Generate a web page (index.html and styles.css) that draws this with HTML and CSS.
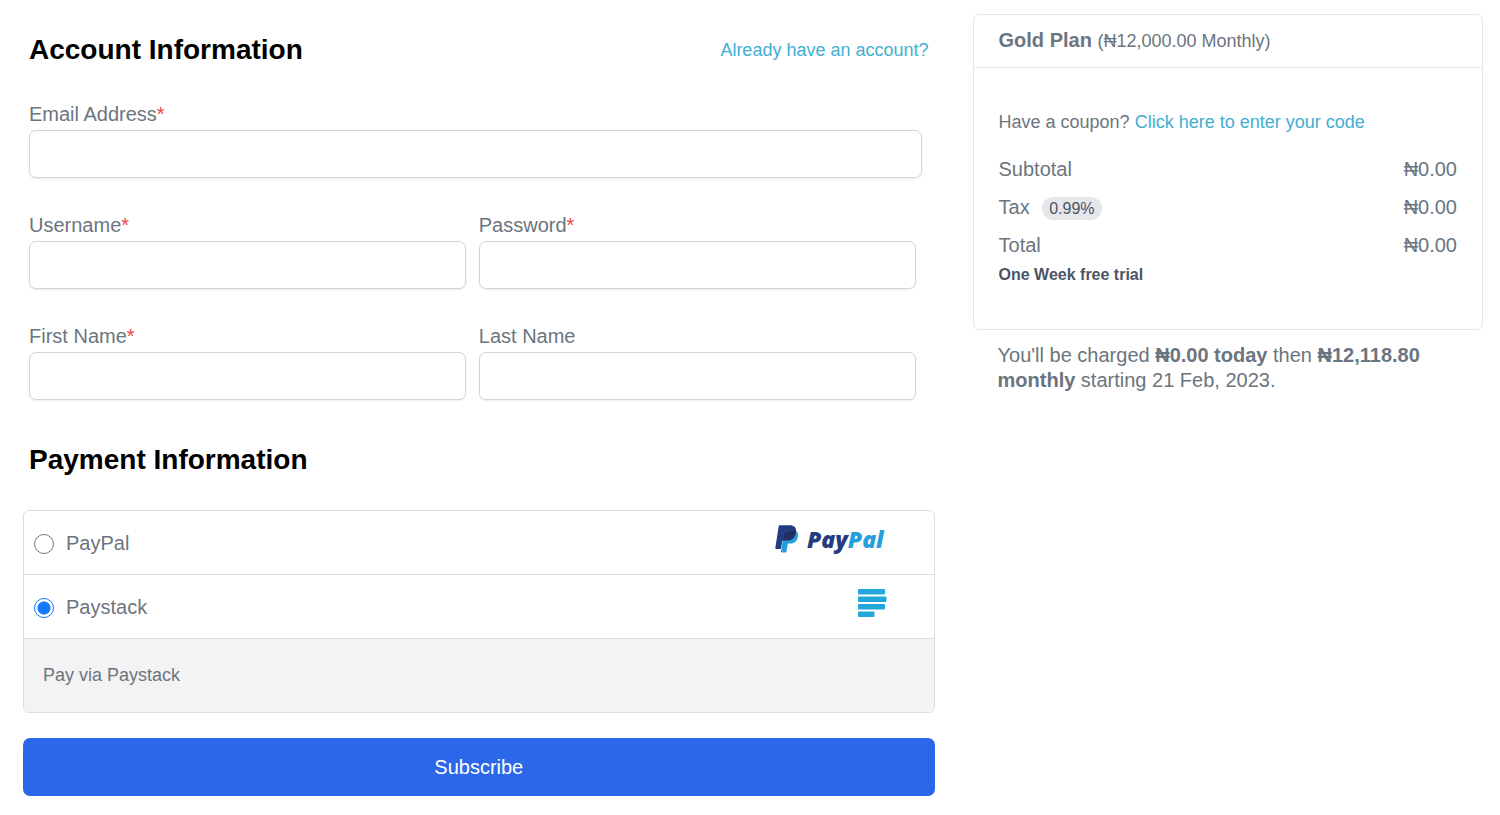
FILE: index.html
```html
<!DOCTYPE html>
<html lang="en">
<head>
  <meta charset="UTF-8" />
  <meta name="viewport" content="width=device-width, initial-scale=1.0" />
  <title>Gold Plan - Checkout</title>
  <link rel="stylesheet" href="styles.css">
</head>
<body>

  <div class="checkout">
    <form class="checkout-form">
      <div class="title-row">
        <h2>Account Information</h2>
        <a href="#" class="link">Already have an account?</a>
      </div>

      <div class="fields">
        <div class="field">
          <label for="email">Email Address<span class="required">*</span></label>
          <input type="email" id="email" required />
        </div>
        <div class="field-row">
          <div class="field">
            <label for="username">Username<span class="required">*</span></label>
            <input type="text" id="username" required />
          </div>
          <div class="field">
            <label for="password">Password<span class="required">*</span></label>
            <input type="password" id="password" required />
          </div>
        </div>
        <div class="field-row">
          <div class="field">
            <label for="first-name">First Name<span class="required">*</span></label>
            <input type="text" id="first-name" required />
          </div>
          <div class="field">
            <label for="last-name">Last Name</label>
            <input type="text" id="last-name" />
          </div>
        </div>
      </div>

      <div class="title-row payment-title">
        <h2>Payment Information</h2>
      </div>

      <div class="gateways">
        <div class="gateway">
          <input type="radio" name="gateway" id="paypal" />
          <label for="paypal">PayPal</label>
          <svg class="gateway-logo" width="112" height="28" viewBox="0 0 112 28" aria-hidden="true">
            <path fill="#253b80" d="M4.6 0.3H14.2C19.2 0.3 21.9 2.9 21 7.4C20 13 16.6 15.6 11.4 15.6H8.8C7.8 15.6 7.3 16.1 7.1 17L6.1 23.2C6 23.8 5.7 24 5.2 24H1C0.5 24 0.2 23.7 0.3 23.1L3.7 1.2C3.8 0.6 4.1 0.3 4.6 0.3Z" />
            <path fill="#249fdc" d="M21.1 6.2C22.8 7.4 23.3 9.4 22.8 12C21.9 16.8 18.9 18.6 14.8 18.6H13.9C13.2 18.6 12.7 19 12.6 19.7L11.5 26.5C11.4 27.1 11.1 27.4 10.5 27.4H6.7C6.2 27.4 5.9 27.1 6 26.6L8.7 8.2C8.9 7.2 9.5 6.6 10.6 6.6Z" />
            <path fill="#222d65" d="M10.6 6.6C9.5 6.6 8.9 7.2 8.7 8.2L7.6 15.9C7.9 15.7 8.3 15.6 8.8 15.6H11.4C16.6 15.6 20 13 21 7.4L21.1 6.2C19.6 5.7 17.8 5.6 15.8 5.7Z" />
            <text class="wordmark" x="32" y="23" fill="#253b80">Pay<tspan fill="#249fdc">Pal</tspan></text>
          </svg>
        </div>
        <div class="gateway">
          <input type="radio" name="gateway" id="paystack" checked />
          <label for="paystack">Paystack</label>
          <svg class="gateway-logo" width="29" height="28" viewBox="0 0 29 28" fill="#22a7db" aria-hidden="true">
            <rect x="0" y="0" width="27" height="5.5" rx="1" />
            <rect x="0" y="7.5" width="28.5" height="5.5" rx="1" />
            <rect x="0" y="15" width="27" height="5.5" rx="1" />
            <rect x="0" y="22.5" width="16.5" height="5.5" rx="1" />
          </svg>
        </div>
        <p class="gateway-info">Pay via Paystack</p>
      </div>

      <button type="submit" class="button">Subscribe</button>
    </form>

    <aside class="summary">
      <div class="card">
        <div class="card-header">
          <strong>Gold Plan</strong> <small>(₦12,000.00 Monthly)</small>
        </div>
        <div class="card-body">
          <p class="coupon">Have a coupon? <a href="#" class="link">Click here to enter your code</a></p>
          <div class="price-row">
            <span>Subtotal</span>
            <span>₦0.00</span>
          </div>
          <div class="price-row">
            <span>Tax <span class="badge">0.99%</span></span>
            <span>₦0.00</span>
          </div>
          <div class="price-row">
            <span>Total</span>
            <span>₦0.00</span>
          </div>
          <p class="trial">One Week free trial</p>
        </div>
      </div>
      <p class="charge-note">You'll be charged <strong>₦0.00 today</strong> then <strong>₦12,118.80 monthly</strong> starting 21 Feb, 2023.</p>
    </aside>
  </div>

</body>
</html>
```
FILE: styles.css
```css
* {
  margin: 0;
  padding: 0;
  box-sizing: border-box;
}

body {
  background: #fff;
  color: #6b7580;
  font-family: Helvetica, "Liberation Sans", Arial, sans-serif;
  font-size: 20px;
  line-height: 28px;
}

.checkout {
  display: grid;
  grid-template-columns: 25fr 14fr;
  gap: 38px;
  align-items: start;
  padding: 14px 17px 18px 23px;
}

.title-row {
  display: flex;
  align-items: center;
  justify-content: space-between;
  padding: 18px 6px 0;
}

h2 {
  color: #000;
  font-size: 28px;
  line-height: 36px;
}

.link {
  color: #43aed2;
  font-size: 18px;
  text-decoration: none;
}

.fields {
  display: flex;
  flex-direction: column;
  gap: 33px;
  padding: 32px 13px 0 6px;
}

.field {
  flex: 1;
}

.field-row {
  display: flex;
  gap: 13px;
  padding-right: 6px;
}

.field label {
  display: block;
  margin-bottom: 2px;
}

.required {
  color: #ef4444;
}

.field input {
  display: block;
  width: 100%;
  height: 48px;
  padding: 0 14px;
  border: 1px solid #d1d5db;
  border-radius: 7px;
  box-shadow: 0 1px 2px rgba(0, 0, 0, 0.08);
  font: inherit;
}

.payment-title {
  padding-top: 42px;
}

.gateways {
  margin-top: 32px;
  border: 1px solid #dedede;
  border-radius: 6px;
  overflow: hidden;
}

.gateway {
  display: flex;
  align-items: center;
  height: 64px;
  padding: 0 47px 0 10px;
  border-bottom: 1px solid #dedede;
}

.gateway label {
  flex: 1;
  padding-left: 12px;
}

.gateway input {
  appearance: none;
  width: 20px;
  height: 20px;
  margin-top: 2px;
  border: 1px solid #767676;
  border-radius: 50%;
}

.gateway input:checked {
  border-color: #147aff;
  background: radial-gradient(circle, #147aff 6px, #fff 7px);
}

.gateway-logo {
  margin-bottom: 8px;
  overflow: visible;
}

.wordmark {
  font-family: "Open Sans", sans-serif;
  font-size: 23px;
  font-style: italic;
  font-weight: 800;
}

.gateway-info {
  padding: 22px 19px 23px;
  background: #f3f3f3;
  font-size: 18px;
}

.button {
  display: block;
  width: 100%;
  height: 58px;
  margin-top: 25px;
  border: none;
  border-radius: 7px;
  background: #2b67e8;
  color: #fff;
  font: inherit;
  cursor: pointer;
}

.card {
  border: 1px solid #e5e7eb;
  border-radius: 6px;
}

.card-header {
  padding: 11px 25px 12px;
  border-bottom: 1px solid #e5e7eb;
}

.card-header small {
  font-size: 18px;
}

.card-body {
  padding: 40px 25px;
}

.coupon {
  margin-bottom: 19px;
  font-size: 18px;
}

.price-row {
  display: flex;
  justify-content: space-between;
  margin-bottom: 10px;
}

.badge {
  display: inline-block;
  margin-left: 7px;
  padding: 0 7px;
  border-radius: 12px;
  background: #e5e7eb;
  color: #4b5563;
  font-size: 16px;
  line-height: 23px;
}

.trial {
  margin-top: -8px;
  color: #4b5563;
  font-size: 16px;
  font-weight: bold;
}

.charge-note {
  padding: 13px 25px 0;
  line-height: 25px;
}
```
